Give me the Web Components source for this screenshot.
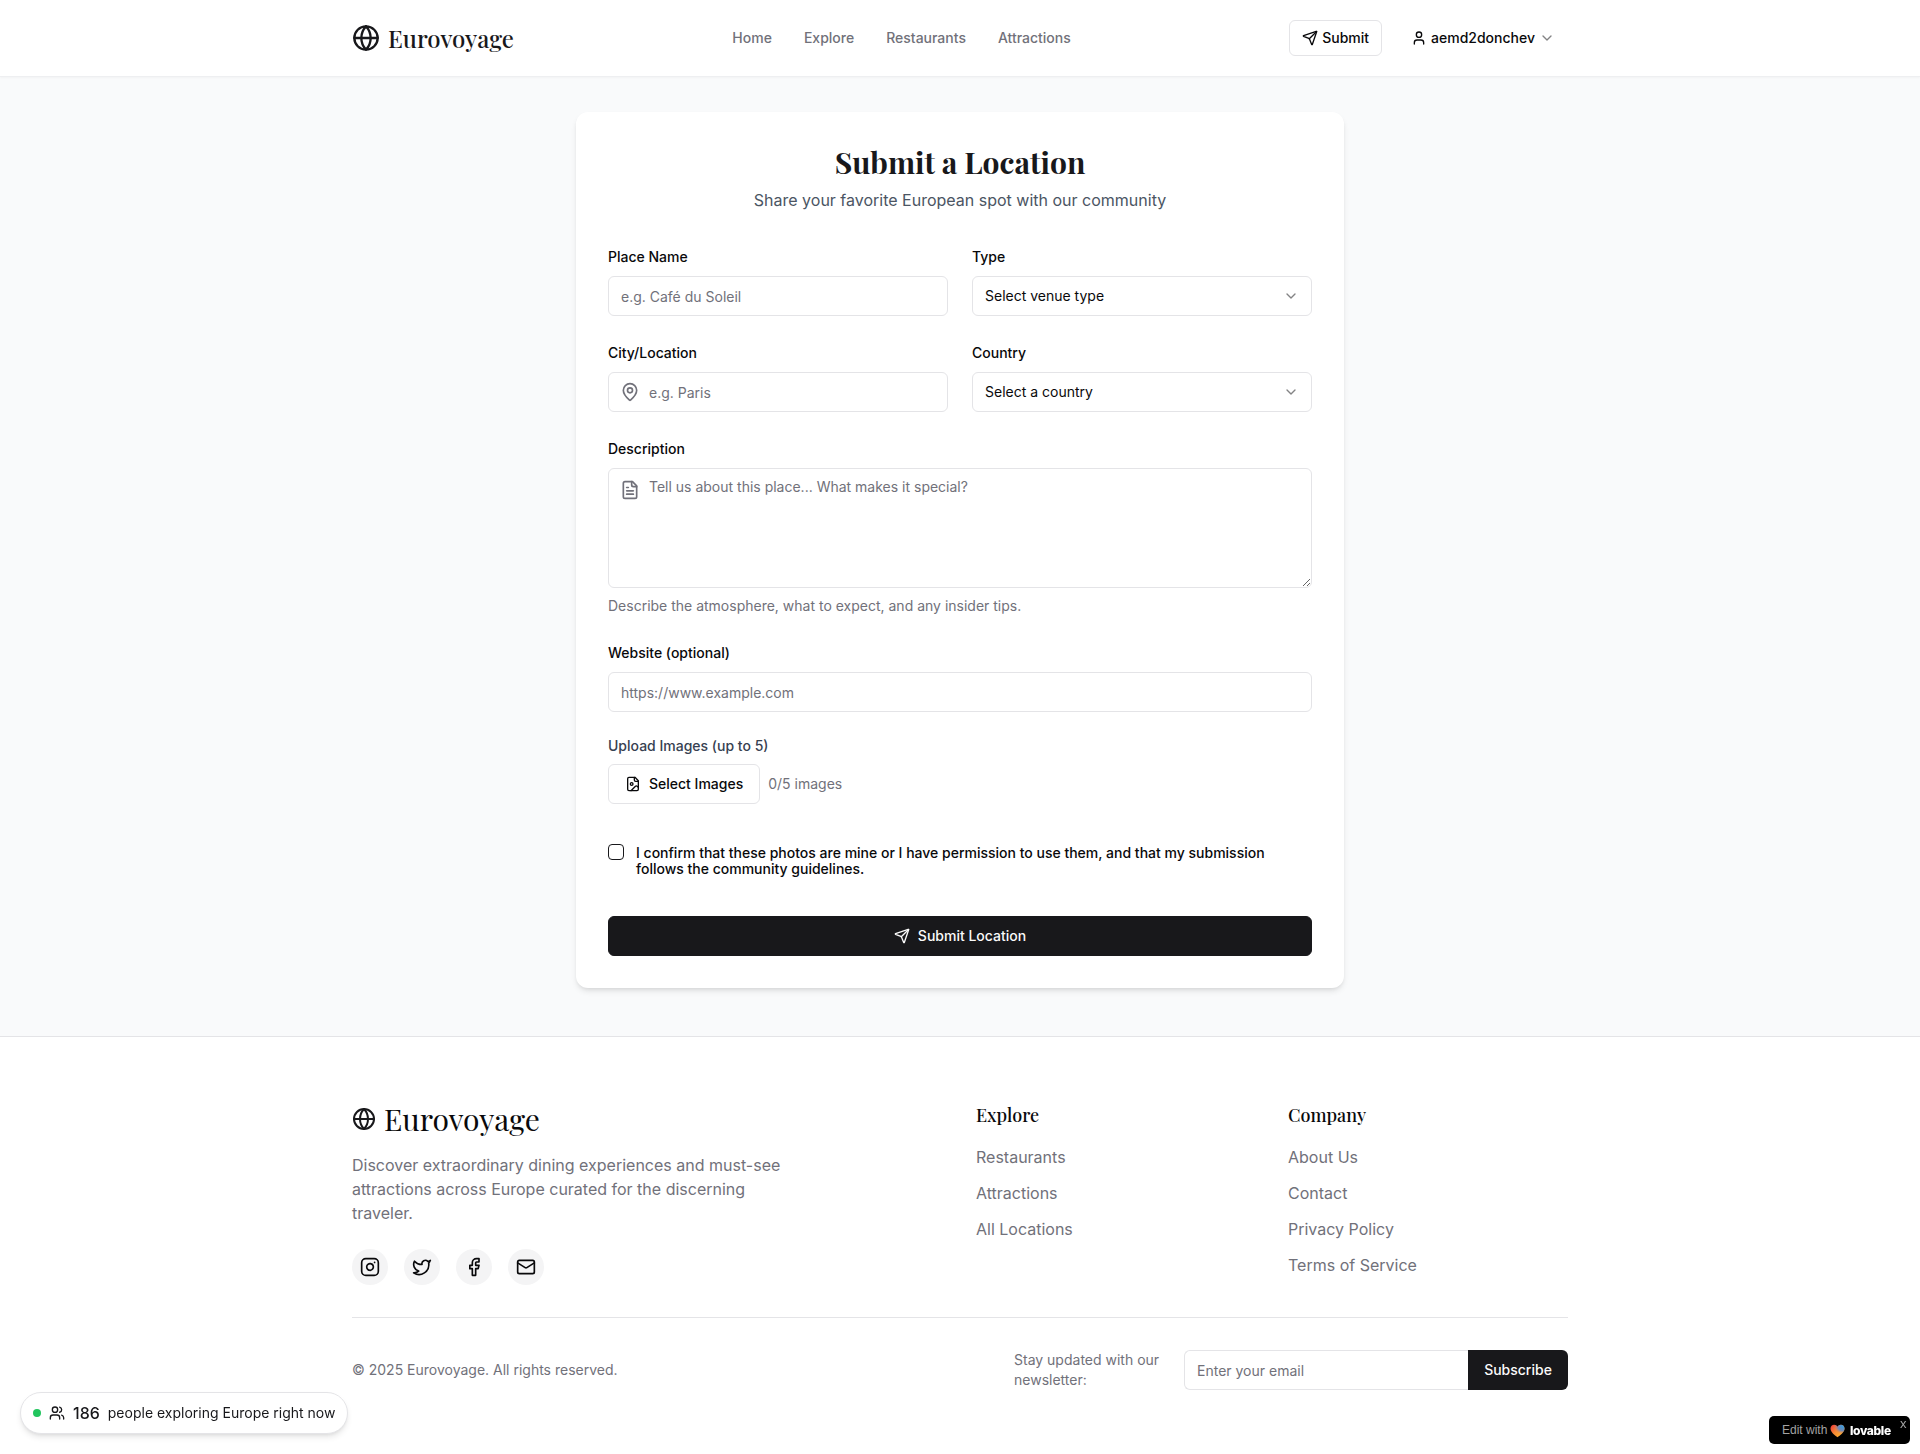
<!DOCTYPE html>
<html lang="en">
<head>
<meta charset="utf-8">
<title>Eurovoyage</title>
<style>
:root{--ink:#09090b;--primary:#18181b;--muted:#71717a;--line:#e4e4e7;--serif:"Playfair Display","Liberation Serif",serif}
html,body{overflow-x:hidden}
body{margin:0;font:16px/24px Inter,"Liberation Sans",sans-serif;color:var(--ink);background:#fff}
</style>
</head>
<body>
<ev-page></ev-page>
<script>
const ICONS={
globe:'<circle cx="12" cy="12" r="10"/><path d="M12 2a14.5 14.5 0 0 0 0 20 14.5 14.5 0 0 0 0-20"/><path d="M2 12h20"/>',
send:'<path d="M14.536 21.686a.5.5 0 0 0 .937-.024l6.5-19a.496.496 0 0 0-.635-.635l-19 6.5a.5.5 0 0 0-.024.937l7.93 3.18a2 2 0 0 1 1.112 1.11z"/><path d="m21.854 2.147-10.94 10.939"/>',
user:'<path d="M19 21v-2a4 4 0 0 0-4-4H9a4 4 0 0 0-4 4v2"/><circle cx="12" cy="7" r="4"/>',
chevron:'<path d="m6 9 6 6 6-6"/>',
pin:'<path d="M20 10c0 4.993-5.539 10.193-7.399 11.799a1 1 0 0 1-1.202 0C9.539 20.193 4 14.993 4 10a8 8 0 0 1 16 0"/><circle cx="12" cy="10" r="3"/>',
file:'<path d="M15 2H6a2 2 0 0 0-2 2v16a2 2 0 0 0 2 2h12a2 2 0 0 0 2-2V7Z"/><path d="M14 2v4a2 2 0 0 0 2 2h4"/><path d="M10 9H8"/><path d="M16 13H8"/><path d="M16 17H8"/>',
image:'<path d="M15 2H6a2 2 0 0 0-2 2v16a2 2 0 0 0 2 2h12a2 2 0 0 0 2-2V7Z"/><path d="M14 2v4a2 2 0 0 0 2 2h4"/><circle cx="10" cy="12" r="2"/><path d="m20 17-1.296-1.296a2.41 2.41 0 0 0-3.408 0L9 22"/>',
instagram:'<rect width="20" height="20" x="2" y="2" rx="5" ry="5"/><path d="M16 11.37A4 4 0 1 1 12.63 8 4 4 0 0 1 16 11.37z"/><path d="M17.5 6.5h.01"/>',
twitter:'<path d="M22 4s-.7 2.1-2 3.4c1.6 10-9.4 17.3-18 11.6 2.2.1 4.4-.6 6-2C3 15.5.5 9.6 3 5c2.2 2.6 5.6 4.1 9 4-.9-4.2 4-6.6 7-3.8 1.1 0 3-1.2 3-1.2z"/>',
facebook:'<path d="M18 2h-3a5 5 0 0 0-5 5v3H7v4h3v8h4v-8h3l1-4h-4V7a1 1 0 0 1 1-1h3z"/>',
mail:'<rect width="20" height="16" x="2" y="4" rx="2"/><path d="m22 7-8.97 5.7a1.94 1.94 0 0 1-2.06 0L2 7"/>',
users:'<path d="M16 21v-2a4 4 0 0 0-4-4H6a4 4 0 0 0-4 4v2"/><circle cx="9" cy="7" r="4"/><path d="M22 21v-2a4 4 0 0 0-3-3.87"/><path d="M16 3.13a4 4 0 0 1 0 7.75"/>'
};
const define=(name,render)=>customElements.define(name,class extends HTMLElement{
  constructor(){super();this.attachShadow({mode:'open'});}
  connectedCallback(){this.shadowRoot.innerHTML='<style>*{box-sizing:border-box}</style>'+render(n=>this.getAttribute(n)||'',this);}
});

define('ev-icon',a=>`<style>:host{display:block;flex:none;width:${a('size')||16}px;height:${a('size')||16}px}svg{display:block}</style>
<svg width="${a('size')||16}" height="${a('size')||16}" viewBox="0 0 24 24" fill="none" stroke="currentColor" stroke-width="2" stroke-linecap="round" stroke-linejoin="round">${ICONS[a('name')]}</svg>`);

define('ev-button',a=>`<style>
:host{display:block}
button{display:flex;width:100%;height:40px;align-items:center;justify-content:center;gap:8px;padding:0 16px;border:1px solid var(--line);border-radius:6px;background:#fff;color:var(--ink);font:500 14px/20px Inter,sans-serif;white-space:nowrap}
:host([variant=primary]) button{background:var(--primary);border-color:var(--primary);color:#fafafa}
:host([variant=ghost]) button{border:0;background:none}
:host([small]) button{height:36px;gap:4px;padding:0 12px}
:host([joined]) button{border:0;border-radius:0 6px 6px 0}
</style><button type="button"><slot></slot></button>`);

define('ev-header',()=>`<style>
:host{display:block;background:#fff;border-bottom:1px solid #eeeff1;box-shadow:0 1px 2px rgba(0,0,0,.03);position:relative}
.bar{width:1216px;height:76px;margin:auto;display:flex;justify-content:space-between;align-items:center}
.brand{display:flex;align-items:center;gap:8px;color:var(--primary);font:500 24px/32px var(--serif)}
nav{display:flex;gap:32px;font:500 14px/20px Inter,sans-serif;color:var(--muted)}
.actions{display:flex;gap:17px;padding-right:1px}.dim{opacity:.5}
</style><div class="bar"><div class="brand"><ev-icon name="globe" size="28"></ev-icon><span>Eurovoyage</span></div>
<nav><span>Home</span><span>Explore</span><span>Restaurants</span><span>Attractions</span></nav>
<div class="actions"><ev-button small><ev-icon name="send"></ev-icon><span>Submit</span></ev-button>
<ev-button small variant="ghost"><ev-icon name="user"></ev-icon><span>aemd2donchev</span><ev-icon class="dim" name="chevron"></ev-icon></ev-button></div></div>`);

define('ev-field',a=>`<style>
:host{display:grid;gap:8px}.l{height:24px}label{font:500 14px/14px Inter,sans-serif}
p{margin:0;font-size:14px;line-height:20px;color:var(--muted)}
</style><div class="l"><label>${a('label')}</label></div><slot></slot>${a('hint')?`<p>${a('hint')}</p>`:''}`);

define('ev-input',a=>`<style>
:host{display:flex;position:relative}
input,textarea{display:block;flex:1;min-width:0;height:40px;margin:0;padding:8px 12px;border:1px solid var(--line);border-radius:6px;background:#fff;color:var(--ink);font:14px/20px Inter,sans-serif;outline:0}
textarea{height:120px}
::placeholder{color:var(--muted);opacity:1}
ev-icon{position:absolute;left:12px;top:${a('rows')?12:10}px;color:var(--muted)}
:host([icon]) input,:host([icon]) textarea{padding-left:40px}
:host([joined]) input{border-right:0;border-radius:6px 0 0 6px}
</style>${a('rows')?`<textarea placeholder="${a('placeholder')}"></textarea>`:`<input placeholder="${a('placeholder')}">`}${a('icon')?`<ev-icon name="${a('icon')}" size="20"></ev-icon>`:''}`);

define('ev-select',()=>`<style>
:host{display:flex;height:40px;align-items:center;justify-content:space-between;padding:0 12px;border:1px solid var(--line);border-radius:6px;box-sizing:border-box;font-size:14px;line-height:20px}
ev-icon{opacity:.5}</style><slot></slot><ev-icon name="chevron"></ev-icon>`);

define('ev-form',()=>`<style>
:host{display:block;width:768px;box-sizing:border-box;padding:32px;border-radius:12px;background:#fff;box-shadow:0 4px 6px -1px rgba(0,0,0,.1),0 2px 4px -2px rgba(0,0,0,.1)}
header{text-align:center;margin-bottom:32px}
h1{margin:0 0 8px;font:700 30px/36px var(--serif);color:var(--primary)}
header p{margin:0;color:#4b5563}
form{display:grid;gap:24px}.two{display:grid;grid-template-columns:1fr 1fr;gap:24px}
.upload{display:grid;gap:8px;font-size:14px;line-height:20px}.upload b{font-weight:500;color:#374151}
.row{display:flex;align-items:center;gap:8px;color:var(--muted)}
.confirm{display:flex;gap:12px;padding:16px 0}
.box{width:16px;height:16px;flex:none;border:1px solid var(--primary);border-radius:4px}
.text{line-height:16px;font-size:16px}.text label{font:500 14px/14px Inter,sans-serif}
</style><header><h1>Submit a Location</h1><p>Share your favorite European spot with our community</p></header>
<form><div class="two"><ev-field label="Place Name"><ev-input placeholder="e.g. Café du Soleil"></ev-input></ev-field>
<ev-field label="Type"><ev-select>Select venue type</ev-select></ev-field></div>
<div class="two"><ev-field label="City/Location"><ev-input icon="pin" placeholder="e.g. Paris"></ev-input></ev-field>
<ev-field label="Country"><ev-select>Select a country</ev-select></ev-field></div>
<ev-field label="Description" hint="Describe the atmosphere, what to expect, and any insider tips."><ev-input rows="5" icon="file" placeholder="Tell us about this place... What makes it special?"></ev-input></ev-field>
<ev-field label="Website (optional)"><ev-input placeholder="https://www.example.com"></ev-input></ev-field>
<div class="upload"><b>Upload Images (up to 5)</b><div class="row"><ev-button><ev-icon name="image"></ev-icon><span>Select Images</span></ev-button><span>0/5 images</span></div></div>
<div class="confirm"><span class="box"></span><div class="text"><label>I confirm that these photos are mine or I have permission to use them, and that my submission follows the community guidelines.</label></div></div>
<ev-button variant="primary"><ev-icon name="send"></ev-icon><span>Submit Location</span></ev-button></form>`);

define('ev-links',a=>`<style>:host{display:block}h3{margin:0 0 16px;font:500 18px/28px var(--serif)}
div{display:grid;gap:12px;color:var(--muted)}</style><h3>${a('heading')}</h3><div><slot></slot></div>`);

define('ev-footer',()=>`<style>
:host{display:block;border-top:1px solid var(--line);background:#fff;padding:64px 0}
.in{width:1216px;margin:auto}.cols{display:grid;grid-template-columns:592px 280px 280px;gap:32px;padding-bottom:32px;border-bottom:1px solid var(--line)}
.brand{display:flex;align-items:center;gap:8px;font:400 30px/36px var(--serif);margin-bottom:16px}.brand ev-icon{color:var(--primary)}
p{margin:0 0 24px;width:448px;color:var(--muted)}
.social{display:flex;gap:16px}.social span{display:grid;place-items:center;width:36px;height:36px;border-radius:50%;background:#f4f4f5}
.low{display:flex;align-items:center;justify-content:space-between;padding-top:32px;font-size:14px;line-height:20px;color:var(--muted)}
.news{display:flex;align-items:center}.news>span{width:170px}.news ev-input{width:284px}.news ev-button{width:100px}
</style><div class="in"><div class="cols"><div><div class="brand"><ev-icon name="globe" size="24"></ev-icon><span>Eurovoyage</span></div>
<p>Discover extraordinary dining experiences and must-see attractions across Europe curated for the discerning traveler.</p>
<div class="social">${['instagram','twitter','facebook','mail'].map(n=>`<span><ev-icon name="${n}" size="20"></ev-icon></span>`).join('')}</div></div>
<ev-links heading="Explore"><span>Restaurants</span><span>Attractions</span><span>All Locations</span></ev-links>
<ev-links heading="Company"><span>About Us</span><span>Contact</span><span>Privacy Policy</span><span>Terms of Service</span></ev-links></div>
<div class="low"><span>© 2025 Eurovoyage. All rights reserved.</span><div class="news"><span>Stay updated with our<br>newsletter:</span><ev-input joined placeholder="Enter your email"></ev-input><ev-button variant="primary" joined>Subscribe</ev-button></div></div></div>`);

define('ev-visitors',()=>`<style>
:host{position:fixed;left:20px;bottom:20px;display:flex;align-items:center;gap:8px;height:42px;box-sizing:border-box;padding:0 12px;border:1px solid var(--line);border-radius:21px;background:#fff;box-shadow:0 4px 6px -1px rgba(0,0,0,.1),0 2px 4px -2px rgba(0,0,0,.1);font-size:14px;white-space:nowrap;color:var(--primary)}
i{width:8px;height:8px;border-radius:50%;background:#22c55e}b{font-weight:500;font-size:16px}
</style><i></i><ev-icon name="users"></ev-icon><b>186</b><span>people exploring Europe right now</span>`);

define('ev-badge',()=>`<style>
:host{position:fixed;right:10px;bottom:10px;width:141px;height:28px;box-sizing:border-box;display:flex;align-items:center;padding-left:13px;border-radius:5px;background:#000;color:#a3a3a3;font:12px/16px "Liberation Sans",sans-serif;white-space:nowrap}
.e{width:48px}svg{flex:none;margin-top:1px}b{width:44px;margin-left:5px;color:#fff;font:800 12px/16px Inter,sans-serif;letter-spacing:-.35px;margin-top:1px}
.x{margin:-13px 0 0 6px;font-size:13px;line-height:12px}
</style><span class="e">Edit with</span><svg width="15" height="14" viewBox="0 0 15 14"><defs>
<linearGradient id="g" x1="0" y1=".2" x2=".9" y2=".9"><stop offset="0" stop-color="#f04438"/><stop offset=".45" stop-color="#f68b35"/><stop offset="1" stop-color="#ffb52e"/></linearGradient>
<radialGradient id="h" cx=".85" cy=".15" r=".6"><stop offset="0" stop-color="#3b9bdc"/><stop offset=".55" stop-color="#5a86c8" stop-opacity=".85"/><stop offset="1" stop-color="#d67b70" stop-opacity="0"/></radialGradient></defs>
<path fill="url(#g)" d="M7.5 13.2C5.2 11.7.5 8.4.5 4.6.5 2.2 2.1.7 4.1.7c1.4 0 2.7.8 3.4 2 .7-1.2 2-2 3.4-2 2 0 3.6 1.500 3.6 3.900 0 3.800-4.700 7.100-7 8.600z"/><path fill="url(#h)" d="M7.5 13.2C5.2 11.7.5 8.4.5 4.6.5 2.2 2.1.7 4.1.7c1.4 0 2.7.8 3.4 2 .7-1.2 2-2 3.4-2 2 0 3.6 1.500 3.6 3.900 0 3.800-4.700 7.100-7 8.600z"/></svg><b>lovable</b><span class="x">x</span>`);

define('ev-page',()=>`<style>:host{display:block}main{display:flex;justify-content:center;background:#f9fafb;padding:35px 0 48px}</style>
<ev-header></ev-header><main><ev-form></ev-form></main><ev-footer></ev-footer><ev-visitors></ev-visitors><ev-badge></ev-badge>`);
</script>
</body>
</html>
